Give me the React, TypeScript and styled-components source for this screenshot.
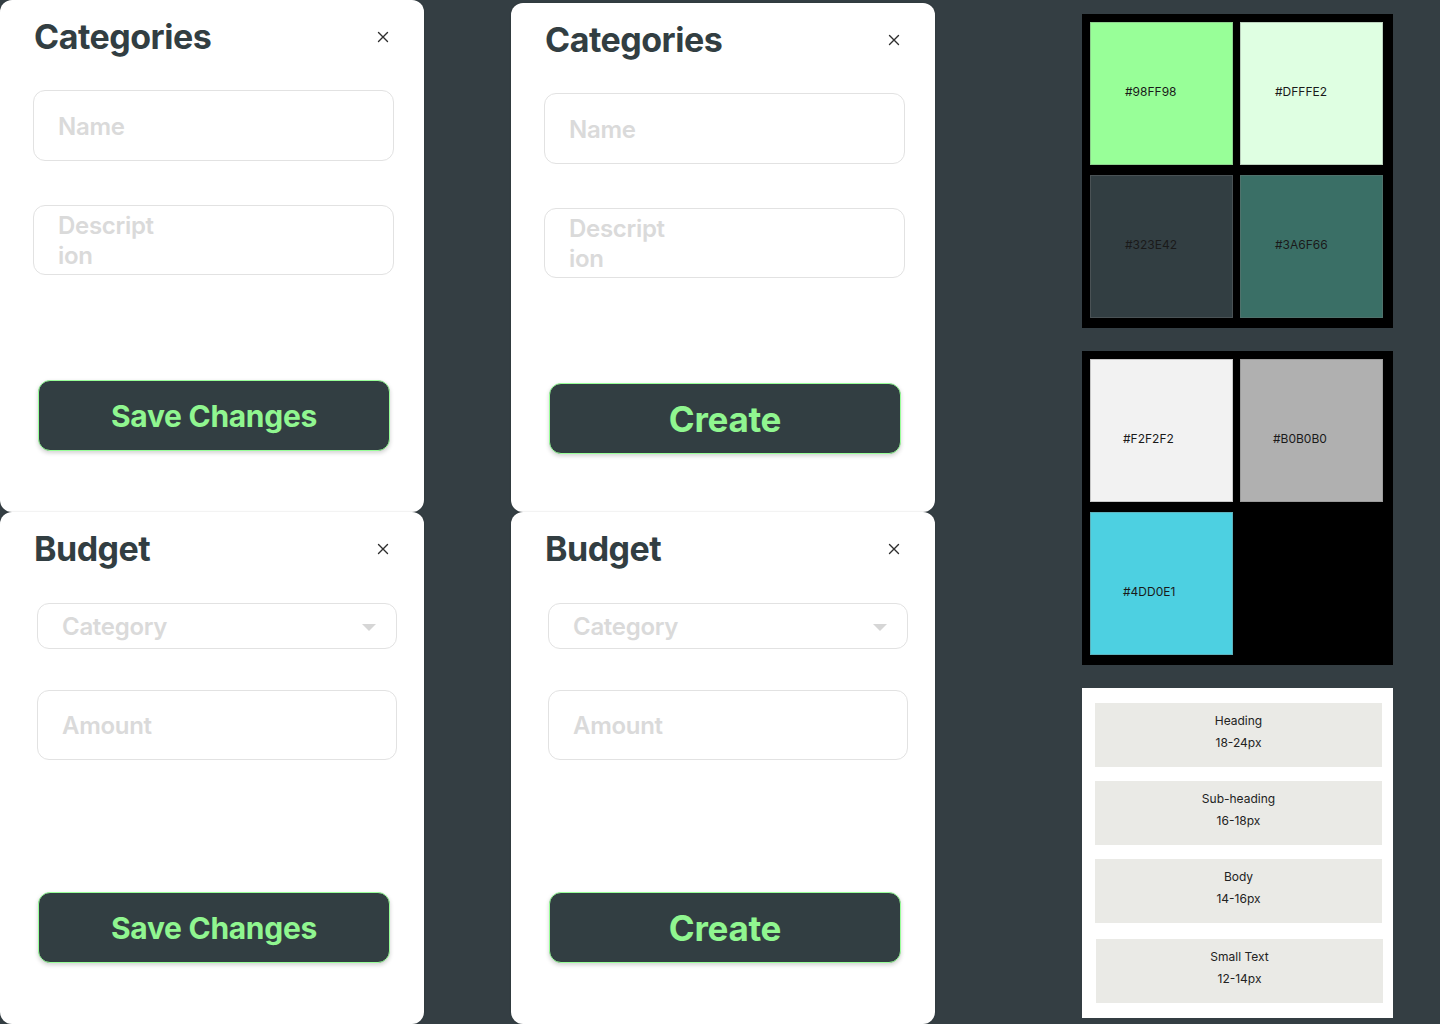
import React from "react";
import styled, { createGlobalStyle } from "styled-components";

const GlobalStyle = createGlobalStyle`
  html, body {
    margin: 0;
    padding: 0;
    background: #343e43;
    font-family: "Inter", "Liberation Sans", sans-serif;
  }
  * { box-sizing: border-box; }
`;

const Page = styled.div`
  display: flex;
  align-items: flex-start;
  width: 1440px;
  height: 1024px;
  overflow: hidden;
  background: #343e43;
`;

const CardColumn = styled.div<{ $ml: number; $pt: number }>`
  display: flex;
  flex-direction: column;
  width: 424px;
  margin-left: ${(p) => p.$ml}px;
  padding-top: ${(p) => p.$pt}px;
`;

const Card = styled.section<{ $h: number }>`
  display: flex;
  flex-direction: column;
  height: ${(p) => p.$h}px;
  background: #ffffff;
  border-radius: 12px;
  box-shadow: 0 0 2px rgba(0, 0, 0, 0.18);
  padding: 16px 34px 0 33px;
`;

const Header = styled.div`
  display: flex;
  align-items: center;
  justify-content: space-between;
  padding-left: 1px;
`;

const Title = styled.h2`
  margin: 0;
  font-family: "Inter", "Liberation Sans", sans-serif;
  font-weight: 700;
  font-size: 34px;
  line-height: 41px;
  letter-spacing: -0.5px;
  color: #323e42;
`;

const CloseButton = styled.button`
  display: flex;
  align-items: center;
  justify-content: center;
  width: 14px;
  height: 14px;
  padding: 0;
  border: none;
  background: none;
  color: #2e2e2e;
`;

const Field = styled.div<{ $mt: number; $h: number; $ml: number; $w: number }>`
  display: flex;
  align-items: center;
  justify-content: space-between;
  margin-top: ${(p) => p.$mt}px;
  margin-left: ${(p) => p.$ml}px;
  width: ${(p) => p.$w}px;
  height: ${(p) => p.$h}px;
  border: 1px solid #e2e2e2;
  border-radius: 12px;
  padding: 2px 20px 0 24px;
`;

const AreaField = styled(Field)`
  align-items: flex-start;
  padding-top: 5px;
`;

const Placeholder = styled.span`
  font-family: "Inter", "Liberation Sans", sans-serif;
  font-weight: 600;
  font-size: 24px;
  line-height: 30px;
  letter-spacing: -0.3px;
  color: #dadada;
`;

const Caret = styled.svg`
  display: block;
`;

const PrimaryButton = styled.button<{ $mt: number; $fs: number }>`
  display: flex;
  align-items: center;
  justify-content: center;
  margin-top: ${(p) => p.$mt}px;
  margin-left: 5px;
  width: 352px;
  height: 71px;
  border: 1px solid #98ff98;
  border-radius: 12px;
  background: #323e42;
  box-shadow: 0 2px 4px rgba(0, 0, 0, 0.18);
  font-family: "Inter", "Liberation Sans", sans-serif;
  font-weight: 700;
  font-size: ${(p) => p.$fs}px;
  letter-spacing: -0.3px;
  color: #90f690;
  padding: 0;
`;

const PaletteColumn = styled.div`
  display: flex;
  flex-direction: column;
  gap: 23px;
  width: 311px;
  margin-left: 147px;
  padding-top: 14px;
`;

const SwatchPanel = styled.div`
  display: grid;
  grid-template-columns: 143px 143px;
  grid-auto-rows: 143px;
  column-gap: 7px;
  row-gap: 10px;
  background: #000000;
  padding: 8px 10px 10px 8px;
`;

const Swatch = styled.div<{ $c: string; $dy: number }>`
  display: flex;
  align-items: center;
  padding-left: ${(p) => (p.$dy > 0 ? 32 : 34)}px;
  padding-top: ${(p) => Math.max(p.$dy, 0)}px;
  padding-bottom: ${(p) => Math.max(-p.$dy, 0)}px;
  background: ${(p) => p.$c};
  border: 1px solid rgba(120, 120, 120, 0.35);
  font-family: "Inter", "Liberation Sans", sans-serif;
  font-size: 12px;
  font-weight: 400;
  color: #1a1a1a;
`;

const TypePanel = styled.div`
  display: flex;
  flex-direction: column;
  gap: 14px;
  background: #ffffff;
  padding: 15px 11px 15px 13px;
`;

const TypeRow = styled.div<{ $shift?: boolean }>`
  display: flex;
  flex-direction: column;
  align-items: center;
  height: 64px;
  padding-top: 7px;
  background: #eaeae6;
  margin-top: ${(p) => (p.$shift ? 2 : 0)}px;
  margin-left: ${(p) => (p.$shift ? 1 : 0)}px;
  margin-right: ${(p) => (p.$shift ? -1 : 0)}px;
  font-family: "Inter", "Liberation Sans", sans-serif;
  font-size: 12px;
  line-height: 22px;
  color: #222222;
`;

const CloseIcon = () => (
  <svg width="12" height="12" viewBox="0 0 12 12" fill="none">
    <path d="M1.5 1.5L10.5 10.5M10.5 1.5L1.5 10.5" stroke="currentColor" strokeWidth="1.4" strokeLinecap="round" />
  </svg>
);

const CategoriesCard = ({ action, h }: { action: string; h: number }) => (
  <Card $h={h}>
    <Header>
      <Title>Categories</Title>
      <CloseButton aria-label="close">
        <CloseIcon />
      </CloseButton>
    </Header>
    <Field $mt={33} $h={71} $ml={0} $w={361}>
      <Placeholder>Name</Placeholder>
    </Field>
    <AreaField $mt={44} $h={70} $ml={0} $w={361}>
      <Placeholder>
        Descript
        <br />
        ion
      </Placeholder>
    </AreaField>
    <PrimaryButton $mt={105} $fs={action === "Create" ? 35 : 30}>
      {action}
    </PrimaryButton>
  </Card>
);

const BudgetCard = ({ action }: { action: string }) => (
  <Card $h={512}>
    <Header>
      <Title>Budget</Title>
      <CloseButton aria-label="close">
        <CloseIcon />
      </CloseButton>
    </Header>
    <Field $mt={34} $h={46} $ml={4} $w={360}>
      <Placeholder>Category</Placeholder>
      <Caret width="14" height="7" viewBox="0 0 14 7">
        <polygon points="0,0 14,0 7,7" fill="#d6d6d6" />
      </Caret>
    </Field>
    <Field $mt={41} $h={70} $ml={4} $w={360}>
      <Placeholder>Amount</Placeholder>
    </Field>
    <PrimaryButton $mt={132} $fs={action === "Create" ? 35 : 30}>
      {action}
    </PrimaryButton>
  </Card>
);

const swatchesA = [
  { c: "#98FF98", label: "#98FF98" },
  { c: "#DFFFE2", label: "#DFFFE2" },
  { c: "#323E42", label: "#323E42" },
  { c: "#3A6F66", label: "#3A6F66" },
];

const swatchesB = [
  { c: "#F2F2F2", label: "#F2F2F2" },
  { c: "#B0B0B0", label: "#B0B0B0" },
  { c: "#4DD0E1", label: "#4DD0E1" },
];

const typeScale = [
  { name: "Heading", size: "18-24px" },
  { name: "Sub-heading", size: "16-18px" },
  { name: "Body", size: "14-16px" },
  { name: "Small Text", size: "12-14px" },
];

export default function App() {
  return (
    <>
      <GlobalStyle />
      <Page>
        <CardColumn $ml={0} $pt={0}>
          <CategoriesCard action="Save Changes" h={512} />
          <BudgetCard action="Save Changes" />
        </CardColumn>
        <CardColumn $ml={87} $pt={3}>
          <CategoriesCard action="Create" h={509} />
          <BudgetCard action="Create" />
        </CardColumn>
        <PaletteColumn>
          <SwatchPanel>
            {swatchesA.map((s) => (
              <Swatch key={s.label} $c={s.c} $dy={-4}>
                {s.label}
              </Swatch>
            ))}
          </SwatchPanel>
          <SwatchPanel>
            {swatchesB.map((s) => (
              <Swatch key={s.label} $c={s.c} $dy={16}>
                {s.label}
              </Swatch>
            ))}
          </SwatchPanel>
          <TypePanel>
            {typeScale.map((t, i) => (
              <TypeRow key={t.name} $shift={i === 3}>
                <span>{t.name}</span>
                <span>{t.size}</span>
              </TypeRow>
            ))}
          </TypePanel>
        </PaletteColumn>
      </Page>
    </>
  );
}
